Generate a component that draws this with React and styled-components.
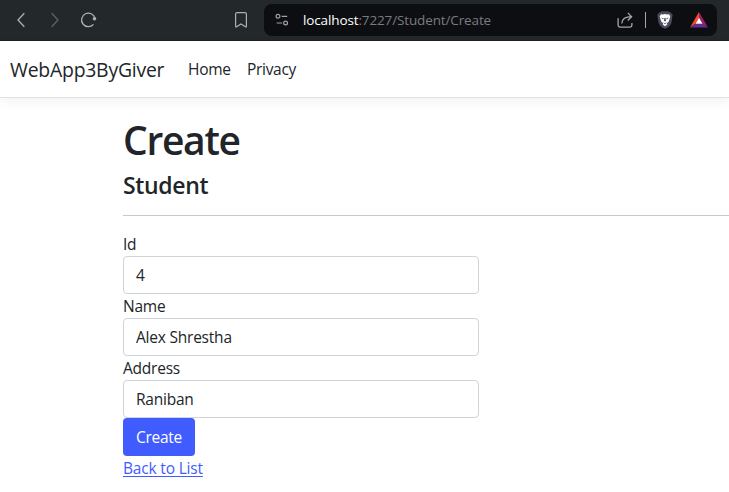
import React from "react";
import styled, { createGlobalStyle } from "styled-components";

const GlobalStyle = createGlobalStyle`
  *, *::before, *::after { box-sizing: border-box; }
  body {
    margin: 0;
    background: #fff;
    color: #212529;
    font-family: "Open Sans", "Noto Sans", sans-serif;
    font-size: 15.5px;
    line-height: 24px;
    letter-spacing: -0.22px;
    overflow: hidden;
  }
`;

const Toolbar = styled.div`
  height: 41px;
  display: flex;
  align-items: center;
  padding: 0 12px;
  background: #23282b;
  border-bottom: 1px solid #1f2126;
`;

const IconButton = styled.span`
  display: flex;
  width: 18px;
  height: 18px;
  margin-right: ${(p) => p.$gap || 0}px;
  svg { display: block; }
`;

const AddressBar = styled.div`
  flex: 1;
  height: 32px;
  display: flex;
  align-items: center;
  padding: 0 8px 0 9px;
  background: #0d0e12;
  border-radius: 8px;
`;

const Url = styled.span`
  flex: 1;
  margin-left: 12px;
  color: #797b80;
  font-size: 13.5px;
  line-height: 20px;
  white-space: nowrap;
  letter-spacing: -0.13px;
`;

const Host = styled.span`
  color: #fff;
`;

const Divider = styled.span`
  width: 1px;
  height: 16px;
  margin: 0 10px 0 8px;
  background: #a5a7aa;
`;

const Navbar = styled.nav`
  height: 57px;
  display: flex;
  align-items: center;
  padding-left: 10px;
  border-bottom: 1px solid #dee2e6;
  box-shadow: 0 4px 12px rgba(0, 0, 0, 0.05);
`;

const Brand = styled.a`
  width: 170px;
  font-size: 19.4px;
  line-height: 30px;
  padding-top: 1px;
  letter-spacing: -0.23px;
`;

const NavLink = styled.a`
  margin-left: 8px;
  width: 51px;
  letter-spacing: -0.3px;
`;

const Main = styled.main`
  padding: 16px 0 0 123px;
`;

const Title = styled.h1`
  margin: 0;
  padding-top: 2px;
  height: 56px;
  font-size: 39px;
  font-weight: 600;
  line-height: 48px;
  letter-spacing: -1.3px;
`;

const Subtitle = styled.h4`
  margin: 0;
  padding-top: 1px;
  height: 29px;
  font-size: 23px;
  font-weight: 600;
  line-height: 29px;
  letter-spacing: -0.35px;
`;

const Rule = styled.hr`
  height: 1px;
  margin: 16px 0;
  border: 0;
  background: #c8c9ca;
`;

const Form = styled.form`
  width: 356px;
`;

const Label = styled.label`
  display: block;
  height: 24px;
`;

const Input = styled.input`
  display: block;
  width: 100%;
  height: 38px;
  padding: 6px 12px;
  border: 1px solid #ced4da;
  border-radius: 4px;
  background: #fff;
  color: #212529;
  font: inherit;
  letter-spacing: inherit;
`;

const Submit = styled.button`
  display: block;
  width: 72px;
  height: 38px;
  padding: 0;
  border: 0;
  border-radius: 4px;
  background: #405cff;
  color: #fff;
  font: inherit;
  letter-spacing: -0.25px;
`;

const BackLink = styled.a`
  color: #405cff;
  text-decoration: underline;
  text-decoration-thickness: 1px;
  text-underline-offset: 2px;
  letter-spacing: -0.18px;
`;

const FIELDS = [
  { id: "id", label: "Id", value: "4" },
  { id: "name", label: "Name", value: "Alex Shrestha" },
  { id: "address", label: "Address", value: "Raniban" },
];

const BackIcon = () => (
  <svg width="18" height="18" fill="none" stroke="#a9b0b6" strokeWidth="1.3">
    <path d="M12.3 2.2 6 9l6.3 6.8" />
  </svg>
);

const ForwardIcon = () => (
  <svg width="18" height="18" fill="none" stroke="#5d6367" strokeWidth="1.3">
    <path d="M5.7 2.2 12 9l-6.3 6.8" />
  </svg>
);

const ReloadIcon = () => (
  <svg width="18" height="18" fill="none" stroke="#a9b0b6" strokeWidth="1.3">
    <path d="M13.5 13.4A6.8 6.8 0 1 1 15 7.2" />
    <circle cx="14.5" cy="7.8" r="1.8" fill="#a9b0b6" stroke="none" />
  </svg>
);

const BookmarkIcon = () => (
  <svg width="18" height="18" fill="none" stroke="#a9b0b6" strokeWidth="1.2">
    <path d="M3.6 3.1q0-1.5 1.5-1.5h7.8q1.5 0 1.5 1.5v12.2q0 1.2-1 .5L9 13l-4.4 2.8q-1 .7-1-.5z" />
  </svg>
);

const SettingsIcon = () => (
  <svg width="18" height="18" fill="none" stroke="#a0a2a6" strokeWidth="1.2">
    <circle cx="5" cy="5.3" r="1.9" />
    <path d="M8.7 5.3h5.5M3.7 12h5.5" />
    <circle cx="12.6" cy="12" r="1.9" />
  </svg>
);

const ShareIcon = () => (
  <svg width="18" height="18" fill="none" stroke="#a5a7aa" strokeWidth="1.3">
    <path d="M1.1 7.2v7.1q0 1.8 1.8 1.8h10.2q1.8 0 1.8-1.8V12" />
    <path d="M4.8 12.5C5 8 7.4 5.7 14.6 5.7M10.8 1.9l3.8 3.8-3.8 3.8" />
  </svg>
);

const ShieldIcon = () => (
  <svg width="18" height="18">
    <path d="M4 1.2 6 .2h6l2 1 2.6 2.2-.9 7c-.5 3.5-2.5 5.5-6.7 7.4-4.2-1.9-6.2-3.9-6.7-7.4l-.9-7z" fill="#4b4c5c" />
    <path d="m5 3.2 2 .2L9 3l2 .4 2-.2 1.3 2.1-.7 2.8-1.1 3L11 12l.2 1.5L9 15.3l-2.2-1.8L7 12l-1.5-.9-1.1-3-.7-2.8z" fill="#fff" />
    <path d="m5 6.5 2.6.8-.3 1.2zM13 6.5l-2.6.8.3 1.2zM8.4 7h1.2l.4 2.8-1 .8-1-.8zM6.7 11.3 9 12.3l2.3-1-2.3 2z" fill="#4b4c5c" />
  </svg>
);

const RewardsIcon = () => (
  <svg width="20" height="18">
    <path d="M10 1 1 16.6l5.6-4L10 7z" fill="#ff4724" />
    <path d="m10 1 9 15.6-5.6-4L10 7z" fill="#9e1f63" />
    <path d="M1 16.6h18l-5.6-4H6.6z" fill="#662d91" />
    <path d="m10 6.8 3.5 5.9h-7z" fill="#fff" />
  </svg>
);

export default function App() {
  return (
    <>
      <GlobalStyle />
      <Toolbar>
        <IconButton $gap={16}><BackIcon /></IconButton>
        <IconButton $gap={16}><ForwardIcon /></IconButton>
        <IconButton $gap={134}><ReloadIcon /></IconButton>
        <IconButton $gap={14}><BookmarkIcon /></IconButton>
        <AddressBar>
          <IconButton><SettingsIcon /></IconButton>
          <Url><Host>localhost</Host>:7227/Student/Create</Url>
          <IconButton $gap={2}><ShareIcon /></IconButton>
          <Divider />
          <IconButton $gap={15}><ShieldIcon /></IconButton>
          <RewardsIcon />
        </AddressBar>
      </Toolbar>
      <Navbar>
        <Brand>WebApp3ByGiver</Brand>
        <NavLink>Home</NavLink>
        <NavLink>Privacy</NavLink>
      </Navbar>
      <Main>
        <Title>Create</Title>
        <Subtitle>Student</Subtitle>
        <Rule />
        <Form>
          {FIELDS.map((f) => (
            <React.Fragment key={f.id}>
              <Label htmlFor={f.id}>{f.label}</Label>
              <Input id={f.id} defaultValue={f.value} />
            </React.Fragment>
          ))}
          <Submit type="button">Create</Submit>
        </Form>
        <BackLink>Back to List</BackLink>
      </Main>
    </>
  );
}
